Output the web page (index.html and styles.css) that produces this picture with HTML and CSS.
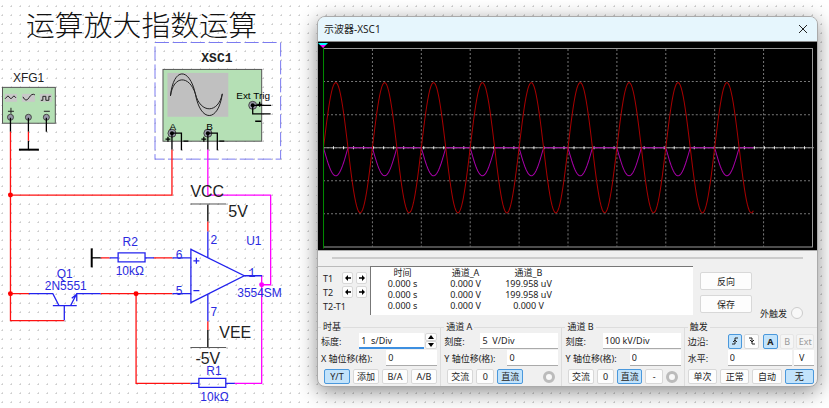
FILE: index.html
```html
<!DOCTYPE html>
<html lang="zh-CN">
<head>
    <meta charset="UTF-8">
    <meta name="viewport" content="width=device-width, initial-scale=1.0">
    <title>示波器-XSC1</title>
    <link rel="stylesheet" href="styles.css">
</head>
<body>
    <svg class="schematic" viewBox="0 0 318 408">
        <text class="heading" x="26" y="36">运算放大指数运算</text>

        <!-- function generator -->
        <text class="label" x="13" y="82">XFG1</text>
        <rect class="device" x="2.5" y="87.5" width="53" height="36"/>
        <g fill="#c8c8c8">
            <rect x="5" y="94" width="12" height="8"/>
            <rect x="22" y="94" width="13" height="8"/>
            <rect x="40" y="94" width="12" height="8"/>
        </g>
        <g class="thin">
            <path d="M5 99l3-3 3 3 3-3 2 2"/>
            <path d="M23 97q3 6 6 1t6-3"/>
            <path d="M41 100.500h2v-4h3v4h3v-4h2"/>
            <path d="M8 111.500h6M11 108v6M44 111.500h6"/>
        </g>
        <g class="terminal">
            <circle cx="10.5" cy="117.5" r="3"/>
            <circle cx="28.5" cy="117.5" r="3"/>
            <circle cx="46.5" cy="117.5" r="3"/>
        </g>
        <path class="black" d="M10.5 118v14M28.5 118v14M46.5 118v14M28.5 141v9"/>
        <path class="black thick" d="M19 150h20"/>

        <!-- oscilloscope -->
        <rect class="selection" x="155.500" y="42.500" width="126" height="117"/>
        <text class="label scope-name" x="202" y="62">XSC1</text>
        <rect class="device" x="163.500" y="69.500" width="99" height="72"/>
        <rect x="168" y="73" width="61" height="44" fill="#c0c0c0"/>
        <path class="thin" d="M171 96C174 67 190 67 196 94C201 123 219 123 223 94M171 96C174 75 190 75 196 94C201 114 219 114 223 94"/>
        <g class="terminal">
            <circle cx="172.500" cy="133.500" r="4"/>
            <circle cx="208.500" cy="133.500" r="4"/>
            <circle cx="253.500" cy="105.500" r="4"/>
        </g>
        <g>
            <circle cx="172.500" cy="133.500" r="2"/>
            <circle cx="208.500" cy="133.500" r="2"/>
            <circle cx="253.500" cy="105.500" r="2"/>
        </g>
        <path class="black" d="M172.500 134v16M173 133.500h9v17M208.500 134v16M209 133.500h9v17M254 105.500h18M253.500 106v8h18"/>
        <path class="black" d="M184 141.500h5M220 141.500h5M256 121.500h6M166 139.500h5M168.500 137v5M202 139.500h5M204.500 137v5M258 104.500h5M260.500 102v5"/>
        <text class="small" x="170" y="130">A</text>
        <text class="small" x="207" y="130">B</text>
        <text class="small" x="237" y="99">Ext Trig</text>

        <!-- wires -->
        <path class="red" d="M10.500 132v189.500h54M10.500 195.500h162V150M28.500 132v9M10.500 294.500h19M101 294.500h72M136.500 294.500v90H191M101 258.500h9M154 258.500h19M208.500 222v10M208.500 322v9"/>
        <path class="magenta" d="M208.500 150v45.500h63v90h-8M262.500 276v108.500H235"/>
        <g fill="#f00">
            <circle cx="10.500" cy="195.500" r="2.500"/>
            <circle cx="10.500" cy="294.500" r="2.500"/>
            <circle cx="136.500" cy="294.500" r="2.500"/>
        </g>
        <circle cx="262.500" cy="285.500" r="2.500" fill="#f0f"/>

        <!-- transistor -->
        <path class="blue" d="M29 294.500h24l6 11.500M53 306.500h24M64.500 306v15M71 306l6-11.500h24M72 299l5-4v7"/>
        <!-- resistors -->
        <path class="blue" d="M110 258.500h8.500M145.500 258.500h9M118.500 253.500h27v9h-27zM191 384.500h8.500M226.500 384.500h9M199.500 379.500h27v9h-27z"/>
        <path class="black" d="M92 258.500h9"/>
        <path class="black thick" d="M92 249v19"/>
        <!-- op-amp and its supply pins -->
        <path class="blue" d="M191.500 250v53.500L245 276.500zM173 258.500h18M173 294.500h18M245 276.500h18M208.500 232v27M208.500 295v27M194 261.500h6M197 258.500v6M194 291.500h6"/>
        <path class="black" d="M208.500 205v17M208.500 331v17"/>
        <path class="bar" d="M191 204.500h36M191 348.500h36"/>

        <g class="blue-text">
            <text x="123" y="247">R2</text>
            <text x="116" y="276">10kΩ</text>
            <text x="57" y="279">Q1</text>
            <text x="45" y="291">2N5551</text>
            <text x="247" y="246">U1</text>
            <text x="238" y="298">3554SM</text>
            <text x="207" y="376">R1</text>
            <text x="201" y="402">10kΩ</text>
        </g>
        <g class="pin">
            <text x="211" y="245">2</text>
            <text x="176" y="260">6</text>
            <text x="176" y="296">5</text>
            <text x="249" y="278">1</text>
            <text x="211" y="317">7</text>
        </g>
        <g class="supply">
            <text x="191" y="197">VCC</text>
            <text x="229" y="218">5V</text>
            <text x="220" y="339">VEE</text>
            <text x="196" y="365">-5V</text>
        </g>
    </svg>

    <main class="window">
        <header class="titlebar">
            <h1>示波器-XSC1</h1>
            <button class="close" type="button" aria-label="关闭">
                <svg width="10" height="10" viewBox="0 0 10 10"><path d="M1 1l8 8M9 1l-8 8"/></svg>
            </button>
        </header>

        <svg class="display" viewBox="0 0 498 208">
            <path class="grid" id="grid"/>
            <path class="frame" d="M5.500 6.500h488v198h-488"/>
            <path class="axis" d="M5 105.500h490"/>
            <path class="axis-ticks" d="M5 105.500h490"/>
            <path class="trace-b" id="trace-b"/>
            <path class="trace-a" id="trace-a"/>
            <path class="cursor" d="M5.500 4v202"/>
            <path fill="#0ff" d="M0 1h10l-2 2H2z"/>
            <path fill="#f0f" d="M2 3h6L5 6z"/>
        </svg>

        <div class="track"></div>

        <section class="readout">
            <div class="cursors">
                <span>T1</span>
                <button class="arrow" type="button" aria-label="T1 左移"><svg viewBox="0 0 8 8"><path d="M0 4l4-4v3h4v2H4v3z"/></svg></button>
                <button class="arrow" type="button" aria-label="T1 右移"><svg viewBox="0 0 8 8"><path d="M8 4L4 0v3H0v2h4v3z"/></svg></button>
                <span>T2</span>
                <button class="arrow" type="button" aria-label="T2 左移"><svg viewBox="0 0 8 8"><path d="M0 4l4-4v3h4v2H4v3z"/></svg></button>
                <button class="arrow" type="button" aria-label="T2 右移"><svg viewBox="0 0 8 8"><path d="M8 4L4 0v3H0v2h4v3z"/></svg></button>
                <span class="diff">T2-T1</span>
            </div>
            <div class="values">
                <table>
                    <tr><th>时间</th><th>通道_A</th><th>通道_B</th></tr>
                    <tr><td>0.000 s</td><td>0.000 V</td><td>199.958 uV</td></tr>
                    <tr><td>0.000 s</td><td>0.000 V</td><td>199.958 uV</td></tr>
                    <tr><td>0.000 s</td><td>0.000 V</td><td>0.000 V</td></tr>
                </table>
            </div>
            <div class="actions">
                <button class="wide" type="button">反向</button>
                <button class="wide" type="button">保存</button>
                <label class="ext">外触发 <input type="radio" name="ext"></label>
            </div>
        </section>

        <section class="settings">
            <fieldset>
                <legend>时基</legend>
                <div class="row">
                    <label for="timebase">标度:</label>
                    <input class="scale focused" id="timebase" type="text" value="1  s/Div">
                    <span class="spinner">
                        <button type="button" aria-label="增加"><svg viewBox="0 0 6 4"><path d="M0 4l3-4 3 4z"/></svg></button>
                        <button type="button" aria-label="减少"><svg viewBox="0 0 6 4"><path d="M0 0l3 4 3-4z"/></svg></button>
                    </span>
                </div>
                <div class="row">
                    <label for="xpos">X 轴位移(格):</label>
                    <input class="offset" id="xpos" type="text" value="0">
                </div>
                <div class="row modes">
                    <button class="on" type="button">Y/T</button>
                    <button type="button">添加</button>
                    <button type="button">B/A</button>
                    <button type="button">A/B</button>
                </div>
            </fieldset>
            <fieldset>
                <legend>通道 A</legend>
                <div class="row">
                    <label for="scale-a">刻度:</label>
                    <input class="scale" id="scale-a" type="text" value="5  V/Div">
                </div>
                <div class="row">
                    <label for="ypos-a">Y 轴位移(格):</label>
                    <input class="offset" id="ypos-a" type="text" value="0">
                </div>
                <div class="row modes">
                    <button type="button">交流</button>
                    <button class="narrow" type="button">0</button>
                    <button class="on" type="button">直流</button>
                    <input class="probe" type="radio" name="probe-a" aria-label="通道 A">
                </div>
            </fieldset>
            <fieldset>
                <legend>通道 B</legend>
                <div class="row">
                    <label for="scale-b">刻度:</label>
                    <input class="scale" id="scale-b" type="text" value="100 kV/Div">
                </div>
                <div class="row">
                    <label for="ypos-b">Y 轴位移(格):</label>
                    <input class="offset" id="ypos-b" type="text" value="0">
                </div>
                <div class="row modes">
                    <button type="button">交流</button>
                    <button class="narrow" type="button">0</button>
                    <button class="on" type="button">直流</button>
                    <button class="narrow" type="button">-</button>
                    <input class="probe" type="radio" name="probe-b" aria-label="通道 B">
                </div>
            </fieldset>
            <fieldset>
                <legend>触发</legend>
                <div class="row edge">
                    <span class="name">边沿:</span>
                    <button class="on" type="button" aria-label="上升沿"><svg viewBox="0 0 8 8"><path d="M1 7h3V1h3M2 5l2-2 2 2"/></svg></button>
                    <button type="button" aria-label="下降沿"><svg viewBox="0 0 8 8"><path d="M1 1h3v6h3M2 3l2 2 2-2"/></svg></button>
                    <button class="on source" type="button">A</button>
                    <button type="button" disabled>B</button>
                    <button type="button" disabled>Ext</button>
                </div>
                <div class="row level">
                    <label class="name" for="level">水平:</label>
                    <input id="level" type="text" value="0">
                    <input class="unit" type="text" value="V" aria-label="单位">
                </div>
                <div class="row modes trigger">
                    <button type="button">单次</button>
                    <button type="button">正常</button>
                    <button type="button">自动</button>
                    <button class="on" type="button">无</button>
                </div>
            </fieldset>
        </section>
    </main>

<script type="text/javascript">
    const left = 5.5, mid = 105.5, div = 48.8, end = 435;

    let grid = "";
    for(let i = 1; i < 10; i++)
        grid += "M" + (left + i * div) + " 7V204";
    for(let i = 1; i < 6; i++)
        grid += "M5 " + (Math.round(6 + i * 33) + 0.5) + "H493";
    document.getElementById("grid").setAttribute("d", grid);

    // A is the sine input, B only follows the positive half, inverted
    let a = "M", b = "M";
    for(let x = left; x <= end; x++){
        const s = Math.sin((x - left) / div * 2 * Math.PI);
        a += x + " " + (mid - 65 * s).toFixed(1) + " ";
        b += x + " " + (mid + 28 * Math.max(s, 0)).toFixed(1) + " ";
    }
    document.getElementById("trace-a").setAttribute("d", a);
    document.getElementById("trace-b").setAttribute("d", b);
</script>
</body>
</html>
```
FILE: styles.css
```css
*{
    box-sizing: border-box;
}

body{
    margin: 0;
    min-height: 100vh;
    display: flex;
    align-items: flex-start;
    background: #fff radial-gradient(circle, #ccc 0, #ddd 1px, transparent 1px) -2px 2px / 9px 9px;
    font-family: "Noto Sans", "Noto Sans CJK SC", sans-serif;
    font-size: 9px;
    line-height: 11px;
    color: #222;
}

/* schematic */

.schematic{
    flex: 0 0 317px;
    height: 407px;
    font-family: "Liberation Sans", sans-serif;
    font-size: 12px;
}

.heading{
    font-family: "Noto Sans CJK SC", sans-serif;
    font-size: 29px;
    font-weight: 300;
    fill: #111;
}

.label{
    fill: #222;
}

.scope-name{
    font-family: "Liberation Mono", monospace;
    font-size: 13px;
    font-weight: bold;
}

.small{
    font-size: 10px;
}

.supply{
    font-size: 16px;
    fill: #222;
}

.blue-text{
    fill: #2a2ae0;
}

.pin{
    font-family: "Liberation Mono", monospace;
    fill: #2a2ae0;
}

.device{
    fill: #b5e0b5;
    stroke: #555;
}

.terminal{
    fill: #99a;
    stroke: #444;
}

.selection{
    fill: none;
    stroke: #7a7af0;
    stroke-dasharray: 14 4;
}

.thin, .black, .red, .magenta, .blue, .bar{
    fill: none;
    stroke: #222;
}

.black{
    stroke: #000;
    stroke-width: 1.3;
}

.thick{
    stroke-width: 2;
}

.red{
    stroke: #f11;
    stroke-width: 1.3;
}

.magenta{
    stroke: #f0f;
    stroke-width: 1.3;
}

.blue{
    stroke: #22e;
    stroke-width: 1.3;
}

.bar{
    stroke: #555;
}

/* instrument window */

.window{
    flex: 1;
    min-width: 0;
    margin: 16px 11px 20px 0;
    border: 1px solid #aaa;
    border-radius: 8px;
    overflow: hidden;
    background: #f0f0f0;
    box-shadow: 0 5px 20px rgba(0, 0, 0, .45);
}

.titlebar{
    display: flex;
    align-items: center;
    justify-content: space-between;
    height: 25px;
    padding: 0 8px 0 6px;
    background: #e6f6fd;
    border-bottom: 1px solid #888;
}

h1{
    margin: 0;
    font-size: 10px;
    font-weight: normal;
}

button, input{
    margin: 0;
    padding: 0;
    font: inherit;
    color: inherit;
}

button{
    display: flex;
    align-items: center;
    justify-content: center;
    border: 1px solid #d8d8d8;
    border-radius: 2px;
    background: #fdfdfd;
}

button.on{
    border-color: #4a98dc;
    background: #c2e3fb;
}

button:disabled{
    color: #999;
    background: #f5f5f5;
    border-color: #e6e6e6;
}

.close{
    width: 12px;
    height: 12px;
    border: none;
    background: none;
}

.close path{
    stroke: #222;
}

.display{
    display: block;
    width: 100%;
    background: #000;
    border-bottom: 1px solid #aaa;
}

.display path{
    stroke-width: 1;
}

.grid{
    fill: none;
    stroke: #777;
    stroke-dasharray: 2 2;
}

.frame, .axis, .axis-ticks{
    fill: none;
    stroke: #999;
}

.display .axis-ticks{
    stroke: #eee;
    stroke-width: 3;
    stroke-dasharray: 1 9;
}

.trace-a{
    fill: none;
    stroke: #a80000;
}

.trace-b{
    fill: none;
    stroke: #a800a8;
}

.cursor{
    stroke: #008c00;
}

.track{
    height: 2px;
    margin: 6px 14px 7px;
    background: #ccc;
}

.readout{
    display: flex;
    height: 49px;
}

.cursors{
    flex: 0 0 52px;
    display: grid;
    grid-template-columns: 16px 11px 11px;
    grid-auto-rows: 12px;
    gap: 2px 3px;
    align-items: center;
    padding: 5px 0 0 5px;
    border-top: 1px solid #bbb;
}

.cursors .diff{
    grid-column: 1 / 4;
}

.arrow{
    width: 11px;
    height: 12px;
}

.arrow svg{
    flex: none;
    width: 6px;
    height: 6px;
}

.values{
    flex: 1;
    background: #fff;
    border-top: 1px solid #777;
    border-left: 1px solid #777;
}

table{
    width: 189px;
    table-layout: fixed;
    border-collapse: collapse;
    text-align: center;
}

th, td{
    padding: 0;
    font-weight: normal;
}

.actions{
    flex: 0 0 124px;
    display: grid;
    grid-template-columns: 52px 1fr;
    grid-template-rows: 18px 18px;
    gap: 5px 8px;
    padding: 6px 14px 0 7px;
}

.actions .wide{
    grid-column: 1;
}

.ext{
    grid-column: 2;
    grid-row: 2;
    align-self: end;
    display: flex;
    align-items: center;
    justify-content: space-between;
    height: 12px;
    margin-bottom: -6px;
    white-space: nowrap;
}

input[type="radio"]{
    appearance: none;
    width: 12px;
    height: 12px;
    border: 1px solid #ccc;
    border-radius: 50%;
    background: #f8f8f8;
}

input.probe[type="radio"]{
    margin: 0 3px 0 auto;
    border: 3px solid #bbb;
}

.settings{
    display: grid;
    grid-template-columns: 123fr 121fr 122fr 132fr;
    margin-top: 6px;
}

fieldset{
    min-width: 0;
    margin: 0;
    padding: 0 3px 2px;
    border: 0 solid #ddd;
    border-width: 1px 1px 0 0;
}

fieldset:last-child{
    border-right: none;
}

legend{
    height: 12px;
    padding: 0 2px;
}

.row{
    display: flex;
    align-items: center;
    justify-content: space-between;
    height: 16px;
    margin-bottom: 1px;
    white-space: nowrap;
}

input[type="text"]{
    min-width: 0;
    height: 16px;
    padding-left: 2px;
    border: none;
    border-bottom: 1px solid #aaa;
    background: #fff;
    white-space: pre;
}

.row .scale{
    width: 78px;
}

.row .focused{
    width: 65px;
    margin-left: auto;
    border-bottom: 2px solid #3d8fe0;
}

.row .offset{
    width: 51px;
}

.spinner{
    display: flex;
    flex-direction: column;
    margin-left: 1px;
}

.spinner button{
    width: 12px;
    height: 8px;
}

.spinner svg{
    width: 6px;
    height: 4px;
}

.modes{
    justify-content: flex-start;
    gap: 3px;
    height: 15px;
    margin: 3px 0 0 3px;
}

.modes button{
    width: 26px;
    height: 15px;
}

.modes .narrow{
    width: 18px;
}

.name{
    flex: 0 0 38px;
}

.edge, .level{
    justify-content: flex-start;
    gap: 2px;
}

.edge button{
    width: 15px;
    height: 15px;
}

.edge .source{
    margin-left: 2px;
    font-weight: bold;
}

.edge button:last-child{
    width: 18px;
}

.edge svg{
    flex: none;
    width: 8px;
    height: 8px;
    fill: none;
    stroke: #222;
}

.level input{
    flex: 1;
}

.level .unit{
    flex: 0 0 20px;
    padding-left: 5px;
}

.trigger{
    margin-left: 0;
}

.trigger button{
    flex: 1;
}
```
